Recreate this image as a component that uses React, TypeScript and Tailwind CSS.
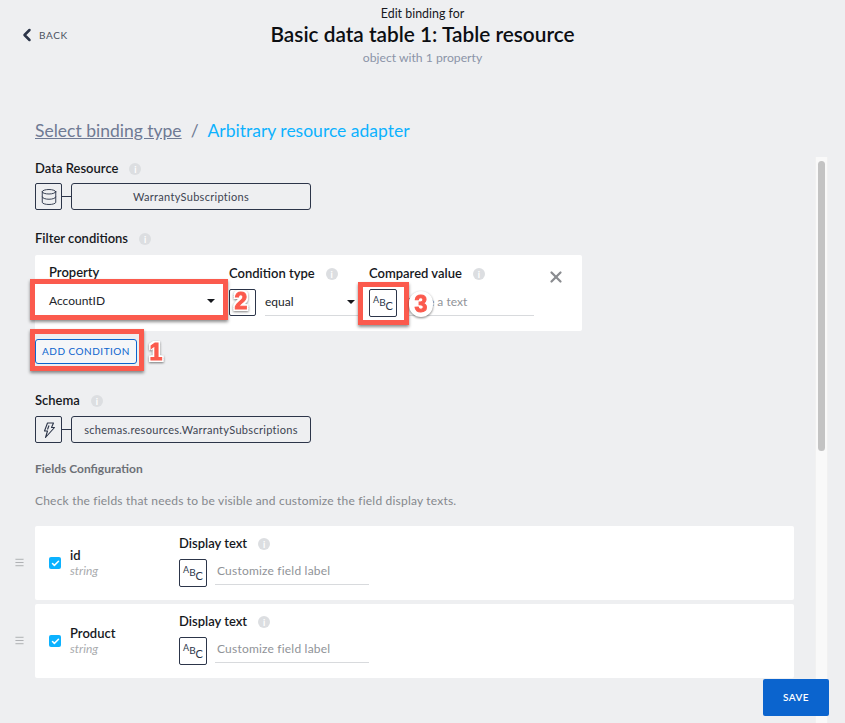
import { ChevronLeft, Database, X, Check, Menu } from "lucide-react";

function InfoDot() {
  return (
    <span className="ml-[11px] inline-flex h-[12px] w-[12px] items-center justify-center rounded-full bg-[#dcdee1] text-[9px] font-bold leading-none text-white">
      i
    </span>
  );
}

function Label({ text, className = "" }: { text: string; className?: string }) {
  return (
    <div className={"flex h-[16px] items-center pt-[2px] text-[13px] font-semibold text-[#16181d] " + className}>
      {text}
      <InfoDot />
    </div>
  );
}

function AbcBox() {
  return (
    <div className="flex h-[28px] w-[28px] shrink-0 items-start justify-center rounded-[2px] border border-[#2c3549] bg-white pt-[5px] text-[#2c3549]">
      <span className="text-[9px] leading-none">A</span>
      <span className="mt-[2px] text-[10px] leading-none">B</span>
      <span className="mt-[5px] text-[11px] leading-none">C</span>
    </div>
  );
}

function Bolt() {
  return (
    <svg width="18" height="18" viewBox="0 0 18 18" fill="none" stroke="currentColor" strokeWidth="1.1" strokeLinejoin="round">
      <path d="M7.5 2h6l-2 4.5h3L5.5 16.5l2-6.5H4.5z" />
      <path d="M9 4.5l-1.5 4" />
    </svg>
  );
}

function Binding({ icon, text }: { icon: React.ReactNode; text: string }) {
  return (
    <div className="flex items-center">
      <div className="flex h-[27px] w-[27px] items-center justify-center rounded-[2px] border border-[#2c3549] text-[#2c3549]">
        {icon}
      </div>
      <div className="h-px w-[9px] bg-[#2c3549]" />
      <div className="flex h-[27px] w-[240px] items-center justify-center rounded-[3px] border border-[#2c3549] pt-px text-[11px] tracking-[0.3px] text-[#3d4452]">
        {text}
      </div>
    </div>
  );
}

function FieldRow({ name }: { name: string }) {
  return (
    <div className="relative flex h-[74px] w-[759px] rounded-[2px] bg-white">
      <div className="absolute left-[-21px] top-[31px] text-[#a9abae]">
        <Menu size={11} strokeWidth={2} />
      </div>
      <div className="ml-[14px] mt-[31px] flex h-[12px] w-[12px] items-center justify-center rounded-[2px] bg-[#0cb2ff] text-white">
        <Check size={9} strokeWidth={4} />
      </div>
      <div className="ml-[9px] mt-[21px] w-[109px]">
        <div className="text-[13px] font-semibold leading-[16px] text-[#16181d]">{name}</div>
        <div className="text-[12px] italic leading-[15px] text-[#a9abae]">string</div>
      </div>
      <div className="mt-[9px]">
        <Label text="Display text" />
        <div className="mt-[8px] flex">
          <AbcBox />
          <div className="ml-[8px] h-[26px] w-[154px] border-b border-[#d8dadd] pl-[2px] pt-[3px] text-[12px] tracking-[0.2px] text-[#909398]">
            Customize field label
          </div>
        </div>
      </div>
    </div>
  );
}

function Num({ n, className }: { n: string; className: string }) {
  return (
    <div
      className={
        "absolute flex h-[26px] items-center justify-center font-['Liberation_Sans',sans-serif] text-[23px] font-bold leading-none text-[#fb5a4d] [-webkit-text-stroke:1px_#fb5a4d] [text-shadow:2px_0_0_#fff,-2px_0_0_#fff,0_2px_0_#fff,0_-2px_0_#fff,2px_2px_0_#fff,-2px_2px_0_#fff,2px_-2px_0_#fff,-2px_-2px_0_#fff] drop-shadow-[0_1px_1px_rgba(0,0,0,0.5)] " +
        className
      }
    >
      {n}
    </div>
  );
}

export default function App() {
  return (
    <div className="relative h-[723px] w-[845px] overflow-hidden bg-[#eeeff1] font-['Lato','Liberation_Sans',sans-serif]">
      {/* header */}
      <div className="grid grid-cols-[1fr_auto_1fr] pt-[6px]">
        <div className="flex items-center pb-px pl-[17px] text-[#2c3549]">
          <ChevronLeft size={20} strokeWidth={3} />
          <span className="ml-[2px] text-[10px] tracking-[0.6px] text-[#4a5160]">BACK</span>
        </div>
        <div className="text-center">
          <div className="text-[12.4px] leading-[15px] text-[#16181d]">Edit binding for</div>
          <div className="mt-px text-[20.8px] font-semibold leading-[24px] text-[#0c0e12]">
            Basic data table 1: Table resource
          </div>
          <div className="mt-[4px] text-[12.2px] leading-[15px] text-[#8b94a8]">object with 1 property</div>
        </div>
        <div />
      </div>

      {/* breadcrumb */}
      <div className="ml-[35px] mt-[55px] flex text-[17.5px] leading-[22px]">
        <span className="text-[#6f7a94] underline">Select binding type</span>
        <span className="mx-[9px] text-[#6f7a94]">/</span>
        <span className="text-[#0cb2ff]">Arbitrary resource adapter</span>
      </div>

      {/* form */}
      <div className="ml-[35px] mt-[18px]">
        <Label text="Data Resource" />
        <div className="mt-[7px]">
          <Binding icon={<Database size={18} strokeWidth={1.25} />} text="WarrantySubscriptions" />
        </div>

        <Label text="Filter conditions" className="mt-[20px]" />
        <div className="relative mt-[9px] flex h-[76px] w-[547px] rounded-[2px] bg-white">
          <div className="ml-[14px] mt-[9px] w-[180px]">
            <div className="text-[13px] font-semibold leading-[16px] text-[#16181d]">Property</div>
            <div className="mt-[7px] flex h-[29px] w-[170px] items-center justify-between border-b border-[#d8dadd] pr-[4px] text-[12px] text-[#22252b]">
              AccountID
              <span className="h-0 w-0 border-x-[4px] border-t-[4px] border-x-transparent border-t-[#16181d]" />
            </div>
          </div>
          <div className="mt-[10px] w-[140px]">
            <Label text="Condition type" />
            <div className="mt-[8px] flex">
              <div className="h-[27px] w-[27px] rounded-[2px] border border-[#2c3549]" />
              <div className="ml-[9px] flex h-[27px] w-[94px] items-center justify-between border-b border-[#d8dadd] pr-[4px] text-[12px] text-[#22252b]">
                equal
                <span className="h-0 w-0 border-x-[4px] border-t-[4px] border-x-transparent border-t-[#16181d]" />
              </div>
            </div>
          </div>
          <div className="mt-[10px]">
            <Label text="Compared value" />
            <div className="mt-[8px] flex">
              <AbcBox />
              <div className="ml-[12px] h-[27px] w-[125px] border-b border-[#d8dadd] pt-[4px] text-[12px] text-[#909398]">
                Type a text
              </div>
            </div>
          </div>
          <X size={18} strokeWidth={3} className="ml-[13px] mt-[13px] text-[#8a8c90]" />
        </div>

        <button className="mt-[8px] flex h-[25px] w-[102px] items-center justify-center rounded-[3px] border border-[#0b64ce] bg-[#f5f6f8] text-[10px] tracking-[0.5px] text-[#0b64ce]">
          ADD CONDITION
        </button>

        <Label text="Schema" className="mt-[28px]" />
        <div className="mt-[8px]">
          <Binding icon={<Bolt />} text="schemas.resources.WarrantySubscriptions" />
        </div>

        <div className="mt-[18px] text-[12px] font-bold leading-[15px] text-[#6d7076]">Fields Configuration</div>
        <div className="mt-[17px] text-[12px] leading-[15px] tracking-[0.2px] text-[#85888d]">
          Check the fields that needs to be visible and customize the field display texts.
        </div>

        <div className="mt-[18px] flex flex-col gap-[4px]">
          <FieldRow name="id" />
          <FieldRow name="Product" />
        </div>
      </div>

      {/* scrollbar */}
      <div className="absolute bottom-0 left-[815px] top-[157px] w-[13px] border-x border-[#f1f1f1] bg-[#f9f9f9] px-[2px] pt-[4px]">
        <div className="h-[290px] rounded-[4px] bg-[#c3c3c3]" />
      </div>

      <button className="absolute left-[763px] top-[679px] h-[37px] w-[66px] rounded-[2px] bg-[#0b64ce] text-[10px] font-semibold tracking-[0.5px] text-white">
        SAVE
      </button>

      {/* annotations */}
      <div className="absolute left-[30px] top-[279px] h-[41px] w-[198px] border-[5px] border-[#fb5a4d] shadow-[0_2px_3px_rgba(0,0,0,0.45)]" />
      <div className="absolute left-[30px] top-[329px] h-[42px] w-[114px] border-[5px] border-[#fb5a4d] shadow-[0_2px_3px_rgba(0,0,0,0.45)]" />
      <div className="absolute left-[358px] top-[282px] h-[43px] w-[51px] border-[5px] border-[#fb5a4d] shadow-[0_2px_3px_rgba(0,0,0,0.45)]" />
      <Num n="1" className="left-[146px] top-[339px] w-[20px]" />
      <Num n="2" className="left-[231px] top-[288px] w-[20px]" />
      <Num n="3" className="left-[409px] top-[291px] w-[24px] rounded-full bg-white" />
    </div>
  );
}
